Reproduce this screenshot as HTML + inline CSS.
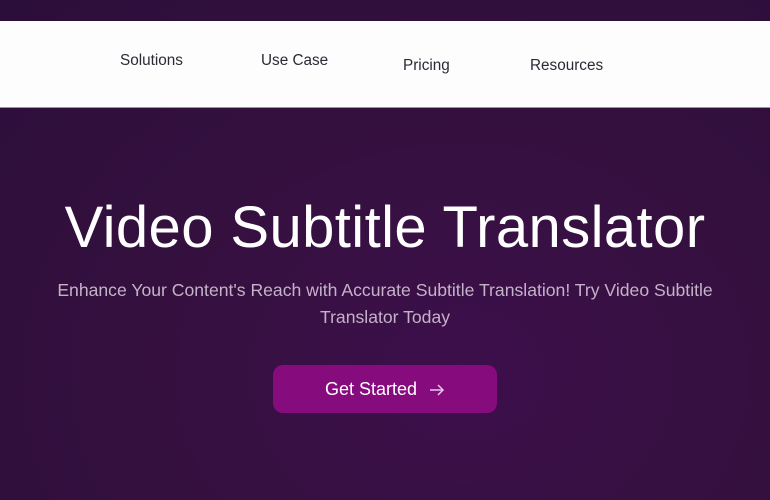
<!DOCTYPE html>
<html><head><style>
html,body{margin:0;padding:0}
body{width:770px;height:500px;overflow:hidden;position:relative;font-family:"Liberation Sans",sans-serif;
background:radial-gradient(ellipse at 60% 75%,#3d0f4c 0%,#35103f 45%,#2c0e3a 100%);}
.nav{position:absolute;left:0;top:21px;width:770px;height:86px;background:#fdfdfe;border-bottom:1px solid #999}
.nav span{position:absolute;font-size:15.3px;color:#2a2a35}
h1{position:absolute;left:0;width:770px;top:193px;margin:0;text-align:center;color:#fff;font-weight:normal;font-size:58px;line-height:70px;letter-spacing:0.4px}
p{position:absolute;left:20px;width:730px;top:277px;margin:0;text-align:center;color:#c4b3c8;font-size:17.6px;line-height:27px}
.btn{position:absolute;left:273px;top:365px;width:224px;height:48px;border-radius:10px;background:#860c7e;color:#fff;font-size:18px;line-height:48px;text-align:center}
.btn svg{vertical-align:-2px;margin-left:12px}
</style></head><body>
<div class="nav">
<span style="left:120px;top:31px">Solutions</span>
<span style="left:261px;top:31px">Use Case</span>
<span style="left:403px;top:36px">Pricing</span>
<span style="left:530px;top:36px">Resources</span>
</div>
<h1>Video Subtitle Translator</h1>
<p>Enhance Your Content's Reach with Accurate Subtitle Translation! Try Video Subtitle Translator Today</p>
<div class="btn">Get Started<svg width="16" height="14" viewBox="0 0 16 14"><path d="M1 7H14M9 2L14 7L9 12" stroke="#e8c8e8" stroke-width="1.5" fill="none"/></svg></div>
</body></html>
